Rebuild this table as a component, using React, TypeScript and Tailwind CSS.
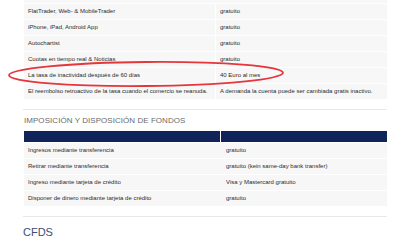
export default function App() {
  const platform = [
    ["FlatTrader, Web- & MobileTrader", "gratuito"],
    ["iPhone, iPad, Android App", "gratuito"],
    ["Autochartist", "gratuito"],
    ["Cuotas en tiempo real & Noticias", "gratuito"],
    ["La tasa de inactividad después de 60 días", "40 Euro al mes"],
    ["El reembolso retroactivo de la tasa cuando el comercio se reanuda.", "A demanda la cuenta puede ser cambiada gratis inactivo."],
  ]

  const funds = [
    ["Ingresos mediante transferencia", "gratuito"],
    ["Retirar mediante transferencia", "gratuito (kein same-day bank transfer)"],
    ["Ingreso mediante tarjeta de crédito", "Visa y Mastercard gratuito"],
    ["Disponer de dinero mediante tarjeta de crédito", "gratuito"],
  ]

  return (
    <div className="relative w-[400px] h-[250px] overflow-hidden bg-white font-['Liberation_Sans',Arial,sans-serif] text-[#2b2b2b]">
      <div className="ml-[24px] w-[363px]">
        {/* tail of the previous row */}
        <div className="h-[3px] bg-[#f7f7f7]" />
        <div className="flex flex-col">
          {platform.map(([label, value], i) => (
            <div key={i} className="flex h-[16px] border-t border-white bg-[#f7f7f7] text-[6px] leading-[15px]">
              <div className="w-[192px] pl-[4px] border-r border-white whitespace-nowrap">{label}</div>
              <div className="flex-1 pl-[4px] whitespace-nowrap">{value}</div>
            </div>
          ))}
        </div>

        <div className="mt-[10px] -ml-[1px] h-px bg-[#e8e8e8]" />

        <h2 className="mt-[6px] h-[15px] text-[8px] leading-[10px] uppercase text-[#6a6a6a] tracking-[0.05px]">
          Imposición y disposición de fondos
        </h2>

        <div className="flex h-[11px] bg-[#10245a]">
          <div className="w-[197px] border-r border-white" />
          <div className="flex-1" />
        </div>
        <div className="flex flex-col">
          {funds.map(([label, value], i) => (
            <div key={i} className="flex h-[16px] border-t border-white bg-[#f7f7f7] text-[6px] leading-[15px]">
              <div className="w-[197px] pl-[4px] whitespace-nowrap">{label}</div>
              <div className="flex-1 pl-[5px] whitespace-nowrap">{value}</div>
            </div>
          ))}
        </div>

        <div className="mt-[10px] -ml-[1px] h-px bg-[#e8e8e8]" />

        <h2 className="mt-[9px] -ml-[1px] text-[11px] leading-[12px] text-[#3b4c7d]">CFDS</h2>
      </div>

      {/* hand-drawn highlight around the inactivity fee row */}
      <svg className="absolute left-0 top-0 pointer-events-none" width="400" height="250">
        <ellipse cx="146" cy="74" rx="137" ry="12" transform="rotate(-0.5 146 74)" fill="none" stroke="#e5363c" strokeWidth="1.8" />
      </svg>
    </div>
  )
}
